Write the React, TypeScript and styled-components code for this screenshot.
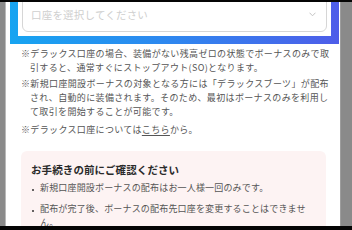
import React from "react";
import styled, { createGlobalStyle } from "styled-components";

const Global = createGlobalStyle`
  html, body { margin: 0; padding: 0; }
  body { background: #000; font-family: "Noto Sans CJK JP", "Noto Sans", sans-serif; }
`;

const Frame = styled.div`
  width: 352px;
  height: 230px;
  display: flex;
  flex-direction: column;
  background: #000;
  overflow: hidden;
`;

const EdgeBar = styled.div<{ $h: number }>`
  height: ${(p) => p.$h}px;
  flex: none;
  background: #050505;
`;

const Viewport = styled.div`
  flex: 1;
  min-height: 0;
  display: flex;
  background: #8b8b8b;
  overflow: hidden;
`;

const SideGutter = styled.div<{ $w: number }>`
  width: ${(p) => p.$w}px;
  flex: none;
  background: #8a8a8a;
`;

const Page = styled.div`
  width: 336px;
  flex: none;
  background: #fff;
  border-left: 1px solid #b9b9b9;
  border-right: 1px solid #9d9d9d;
  box-sizing: border-box;
  overflow: hidden;
`;

const Scroll = styled.div`
  margin-top: -18px;
  display: flex;
  flex-direction: column;
`;

const GradientFrame = styled.div`
  margin-left: 4px;
  width: 329px;
  box-sizing: border-box;
  padding: 8px;
  background: linear-gradient(90deg, #17a4f1 0%, #2f86ef 50%, #4e5de9 100%);
`;

const FrameInner = styled.div`
  background: #fff;
  padding: 4px;
`;

const Select = styled.div`
  height: 36px;
  box-sizing: border-box;
  border: 1px solid #d6d6d6;
  border-radius: 6px;
  display: flex;
  align-items: center;
  justify-content: space-between;
  padding: 0 10px 0 8px;
  background: #fff;
`;

const Placeholder = styled.span`
  font-size: 10.5px;
  letter-spacing: 0.2px;
  color: #cfcfcf;
`;

const Notes = styled.div`
  margin-left: 15px;
  width: 316px;
  margin-top: 3px;
  display: flex;
  flex-direction: column;
`;

const Note = styled.p<{ $gap: number }>`
  margin: ${(p) => p.$gap}px 0 0;
  font-size: 9px;
  line-height: 14px;
  letter-spacing: 0.35px;
  color: #555;
  padding-left: 1em;
  text-indent: -1em;
`;

const Link = styled.a`
  color: #555;
  text-decoration: underline;
  text-underline-offset: 2px;
`;

const ConfirmBox = styled.div`
  margin: 14px 0 0 15px;
  width: 305px;
  box-sizing: border-box;
  background: #fdf3f3;
  border-radius: 6px;
  padding: 11px 20px 12px 10px;
`;

const ConfirmTitle = styled.h3`
  margin: 0;
  font-size: 10.5px;
  line-height: 16px;
  font-weight: 700;
  letter-spacing: 0.1px;
  color: #2a2a2a;
`;

const BulletList = styled.ul`
  list-style: none;
  margin: 3px 0 0;
  padding: 0;
`;

const Bullet = styled.li<{ $gap: number }>`
  position: relative;
  margin-top: ${(p) => p.$gap}px;
  padding-left: 9px;
  font-size: 9px;
  line-height: 14px;
  letter-spacing: 0.17px;
  color: #555;
  &::before {
    content: "";
    position: absolute;
    left: 1px;
    top: 7.5px;
    width: 2px;
    height: 2px;
    border-radius: 50%;
    background: #333;
  }
`;

const Chevron = () => (
  <svg width="7" height="5" viewBox="0 0 7 5" fill="none">
    <path d="M0.8 1 L3.5 3.8 L6.2 1" stroke="#c4c4c4" strokeWidth="1" strokeLinecap="round" />
  </svg>
);

export default function App() {
  return (
    <>
      <Global />
      <Frame>
        <EdgeBar $h={2} />
        <Viewport>
          <SideGutter $w={5} />
          <Page>
            <Scroll>
              <GradientFrame>
                <FrameInner>
                  <Select>
                    <Placeholder>口座を選択してください</Placeholder>
                    <Chevron />
                  </Select>
                </FrameInner>
              </GradientFrame>
              <Notes>
                <Note $gap={0}>
                  ※デラックス口座の場合、装備がない残高ゼロの状態でボーナスのみで取引すると、通常すぐにストップアウト(SO)となります。
                </Note>
                <Note $gap={2}>
                  ※新規口座開設ボーナスの対象となる方には「デラックスブーツ」が配布され、自動的に装備されます。そのため、最初はボーナスのみを利用して取引を開始することが可能です。
                </Note>
                <Note $gap={4}>
                  ※デラックス口座については<Link>こちら</Link>から。
                </Note>
              </Notes>
              <ConfirmBox>
                <ConfirmTitle>お手続きの前にご確認ください</ConfirmTitle>
                <BulletList>
                  <Bullet $gap={0}>新規口座開設ボーナスの配布はお一人様一回のみです。</Bullet>
                  <Bullet $gap={7}>配布が完了後、ボーナスの配布先口座を変更することはできません。</Bullet>
                </BulletList>
              </ConfirmBox>
            </Scroll>
          </Page>
          <SideGutter $w={11} />
        </Viewport>
        <EdgeBar $h={4} />
      </Frame>
    </>
  );
}
